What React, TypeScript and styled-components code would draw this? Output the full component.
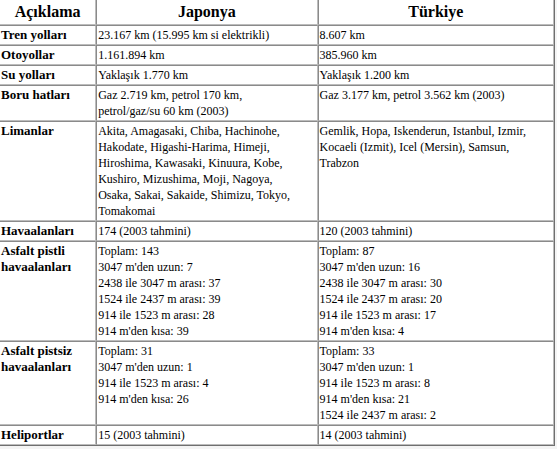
import styled, { createGlobalStyle } from "styled-components";

const GlobalStyle = createGlobalStyle`
  html, body {
    margin: 0;
    padding: 0;
    background: #ffffff;
    font-family: "Liberation Serif", "Times New Roman", serif;
  }
`;

interface Row {
  label: string[];
  japan: string[];
  turkey: string[];
}

const rows: Row[] = [
  {
    label: ["Tren yolları"],
    japan: ["23.167 km (15.995 km si elektrikli)"],
    turkey: ["8.607 km"],
  },
  { label: ["Otoyollar"], japan: ["1.161.894 km"], turkey: ["385.960 km"] },
  {
    label: ["Su yolları"],
    japan: ["Yaklaşık 1.770 km"],
    turkey: ["Yaklaşık 1.200 km"],
  },
  {
    label: ["Boru hatları"],
    japan: ["Gaz 2.719 km, petrol 170 km,", "petrol/gaz/su 60 km (2003)"],
    turkey: ["Gaz 3.177 km, petrol 3.562 km (2003)"],
  },
  {
    label: ["Limanlar"],
    japan: [
      "Akita, Amagasaki, Chiba, Hachinohe,",
      "Hakodate, Higashi-Harima, Himeji,",
      "Hiroshima, Kawasaki, Kinuura, Kobe,",
      "Kushiro, Mizushima, Moji, Nagoya,",
      "Osaka, Sakai, Sakaide, Shimizu, Tokyo,",
      "Tomakomai",
    ],
    turkey: [
      "Gemlik, Hopa, Iskenderun, Istanbul, Izmir,",
      "Kocaeli (Izmit), Icel (Mersin), Samsun,",
      "Trabzon",
    ],
  },
  {
    label: ["Havaalanları"],
    japan: ["174 (2003 tahmini)"],
    turkey: ["120 (2003 tahmini)"],
  },
  {
    label: ["Asfalt pistli", "havaalanları"],
    japan: [
      "Toplam: 143",
      "3047 m'den uzun: 7",
      "2438 ile 3047 m arası: 37",
      "1524 ile 2437 m arası: 39",
      "914 ile 1523 m arası: 28",
      "914 m'den kısa: 39",
    ],
    turkey: [
      "Toplam: 87",
      "3047 m'den uzun: 16",
      "2438 ile 3047 m arası: 30",
      "1524 ile 2437 m arası: 20",
      "914 ile 1523 m arası: 17",
      "914 m'den kısa: 4",
    ],
  },
  {
    label: ["Asfalt pistsiz", "havaalanları"],
    japan: [
      "Toplam: 31",
      "3047 m'den uzun: 1",
      "914 ile 1523 m arası: 4",
      "914 m'den kısa: 26",
    ],
    turkey: [
      "Toplam: 33",
      "3047 m'den uzun: 1",
      "914 ile 1523 m arası: 8",
      "914 m'den kısa: 21",
      "1524 ile 2437 m arası: 2",
    ],
  },
  {
    label: ["Heliportlar"],
    japan: ["15 (2003 tahmini)"],
    turkey: ["14 (2003 tahmini)"],
  },
];

function Lines({ lines }: { lines: string[] }) {
  return (
    <>
      {lines.map((line, i) => (
        <span key={i}>
          {i > 0 && <br />}
          {line}
        </span>
      ))}
    </>
  );
}

export default function App() {
  return (
    <>
      <GlobalStyle />
      <Frame>
        <Table>
          <colgroup>
            <col style={{ width: 96 }} />
            <col style={{ width: 221 }} />
            <col style={{ width: 236 }} />
          </colgroup>
          <thead>
            <tr>
              <HeadCell $first>Açıklama</HeadCell>
              <HeadCell>Japonya</HeadCell>
              <HeadCell>Türkiye</HeadCell>
            </tr>
          </thead>
          <tbody>
            {rows.map((row) => (
              <tr key={row.label.join(" ")}>
                <LabelCell scope="row">
                  <Lines lines={row.label} />
                </LabelCell>
                <DataCell>
                  <Lines lines={row.japan} />
                </DataCell>
                <DataCell>
                  <Lines lines={row.turkey} />
                </DataCell>
              </tr>
            ))}
          </tbody>
        </Table>
      </Frame>
    </>
  );
}

const Frame = styled.div`
  width: 557px;
  height: 449px;
  background: #f4f4f4;
  overflow: hidden;
`;

const Table = styled.table`
  width: 555px;
  table-layout: fixed;
  border-collapse: separate;
  border-spacing: 0;
  background: #ffffff;
  border-right: 1px solid #6f6f6f;
  border-bottom: 1px solid #6f6f6f;
  color: #000000;
`;

const cellBase = `
  padding: 1px;
  vertical-align: top;
  white-space: nowrap;
  overflow: hidden;
  font-family: "Liberation Serif", "Times New Roman", serif;
  border-top: 1px solid #8a8a8a;
  border-left: 1px solid #8a8a8a;
  border-bottom: 1px solid #bcbcbc;
  border-right: 1px solid #bcbcbc;
`;

const HeadCell = styled.th<{ $first?: boolean }>`
  ${cellBase}
  border-top: none;
  border-left: ${(p) => (p.$first ? "none" : "1px solid #8a8a8a")};
  text-align: center;
  font-size: 16px;
  font-weight: bold;
  line-height: 22px;
`;

const LabelCell = styled.th`
  ${cellBase}
  border-left: none;
  text-align: left;
  font-size: 13px;
  font-weight: bold;
  line-height: 16px;
`;

const DataCell = styled.td`
  ${cellBase}
  font-size: 12px;
  line-height: 16px;
`;
